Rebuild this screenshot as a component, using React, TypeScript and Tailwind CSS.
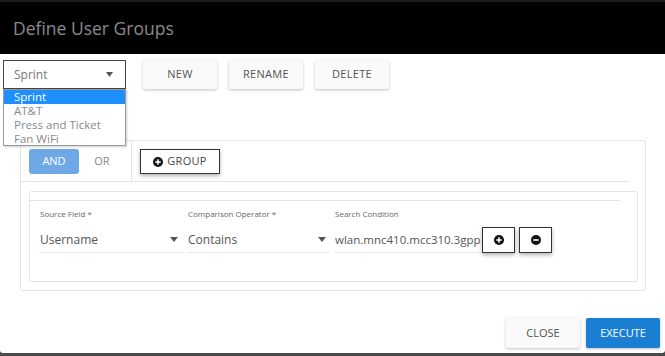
import React from "react";

const font = { fontFamily: '"Open Sans", "Liberation Sans", sans-serif' };

function CircleIcon({ plus }: { plus: boolean }) {
  return (
    <svg width="10" height="10" viewBox="0 0 10 10">
      <circle cx="5" cy="5" r="5" fill="#111" />
      <rect x="2.3" y="4.2" width="5.4" height="1.6" fill="#fff" />
      {plus && <rect x="4.2" y="2.3" width="1.6" height="5.4" fill="#fff" />}
    </svg>
  );
}

function Caret() {
  return (
    <svg width="8" height="5" viewBox="0 0 8 5">
      <path d="M0 0 L8 0 L4 5 Z" fill="#555" />
    </svg>
  );
}

function TopButton({ label }: { label: string }) {
  return (
    <button className="w-[74px] h-[29px] bg-[#fafafa] text-[#555] text-[11px] tracking-[0.3px] rounded-[2px] shadow-[0_1px_3px_rgba(0,0,0,0.25)] flex items-center justify-center">
      {label}
    </button>
  );
}

export default function App() {
  return (
    <div style={font} className="w-[665px] h-[356px] flex flex-col bg-[#4a4a4a] overflow-hidden">
      <div className="h-[54px] bg-black border-t-2 border-[#1c1c1c] flex items-center pl-[13px] shrink-0">
        <span className="text-[17.5px] text-[#8a8a8a]">Define User Groups</span>
      </div>
      <div className="h-[299px] bg-white rounded-b-[3px] flex flex-col shrink-0">
        {/* top row */}
        <div className="flex items-start pt-[6px] pl-[3px]">
          <div className="relative w-[123px] h-[29px]">
            <div className="w-full h-full border border-[#444] flex items-center justify-between pl-[10px] pr-[12px] text-[12px] text-[#777]">
              <span>Sprint</span>
              <svg width="7" height="5" viewBox="0 0 7 5"><path d="M0 0 L7 0 L3.5 5 Z" fill="#555" /></svg>
            </div>
            <div className="absolute left-0 top-[29px] w-[123px] bg-white border border-[#9a9a9a] shadow-[1px_1px_2px_rgba(0,0,0,0.2)] text-[11.5px] text-[#8a8a8a] z-10 flex flex-col">
              <div className="bg-[#1e8fff] text-white pl-[10px] h-[14px] leading-[14px]">Sprint</div>
              <div className="pl-[10px] h-[14px] leading-[14px]">AT&amp;T</div>
              <div className="pl-[10px] h-[14px] leading-[14px]">Press and Ticket</div>
              <div className="pl-[10px] h-[13px] leading-[13px]">Fan WiFi</div>
            </div>
          </div>
          <div className="flex gap-[12px] ml-[17px]">
            <TopButton label="NEW" />
            <TopButton label="RENAME" />
            <TopButton label="DELETE" />
          </div>
        </div>

        {/* group box */}
        <div className="mt-[51px] ml-[20px] w-[626px] h-[151px] border border-[#e4e4e4] rounded-[3px] flex flex-col">
          <div className="h-[41px] flex mr-[16px] border-b border-[#e4e4e4]">
            <div className="flex items-start pt-[8px] pl-[8px] w-[111px] border-r border-[#e4e4e4]">
              <button className="w-[50px] h-[25px] bg-[#6fa8e6] text-white text-[11px] rounded-[3px]">AND</button>
              <button className="w-[46px] h-[25px] text-[#888] text-[11px]">OR</button>
            </div>
            <div className="pl-[8px] pt-[8px]">
              <button className="w-[80px] h-[25px] border border-[#333] bg-white text-[#444] text-[11px] shadow-[0_2px_4px_rgba(0,0,0,0.3)] flex items-center justify-center gap-[4px]">
                <CircleIcon plus />
                <span className="tracking-[0.3px]">GROUP</span>
              </button>
            </div>
          </div>
          <div className="mt-[9px] ml-[8px] w-[609px] h-[91px] border border-[#e4e4e4] rounded-[3px] flex flex-col">
            <div className="mt-[8px] mr-[17px] border-t border-[#e4e4e4]" />
            <div className="flex pl-[10px] pt-[7px] gap-[4px]">
              <div className="w-[144px] flex flex-col">
                <span className="text-[8px] text-[#666] leading-[12px]">Source Field *</span>
                <div className="mt-[7px] h-[26px] border-b border-[#e8e8e8] flex items-center justify-between pr-[6px]">
                  <span className="text-[12px] text-[#555]">Username</span>
                  <Caret />
                </div>
              </div>
              <div className="w-[141px] flex flex-col">
                <span className="text-[8px] text-[#666] leading-[12px]">Comparison Operator *</span>
                <div className="mt-[7px] h-[26px] border-b border-[#e8e8e8] flex items-center justify-between pr-[3px]">
                  <span className="text-[12px] text-[#555]">Contains</span>
                  <Caret />
                </div>
              </div>
              <div className="flex flex-col ml-[2px]">
                <span className="text-[8px] text-[#666] leading-[12px]">Search Condition</span>
                <div className="mt-[7px] flex items-start">
                  <div className="w-[146px] h-[26px] border-b border-[#e8e8e8] overflow-hidden whitespace-nowrap flex items-center">
                    <span className="text-[11.5px] text-[#555]">wlan.mnc410.mcc310.3gpp</span>
                  </div>
                  <div className="flex gap-[4px] ml-[1px]">
                    <button className="w-[33px] h-[26px] border border-[#333] bg-white shadow-[0_2px_4px_rgba(0,0,0,0.3)] flex items-center justify-center">
                      <CircleIcon plus />
                    </button>
                    <button className="w-[33px] h-[26px] border border-[#333] bg-white shadow-[0_2px_4px_rgba(0,0,0,0.3)] flex items-center justify-center">
                      <CircleIcon plus={false} />
                    </button>
                  </div>
                </div>
              </div>
            </div>
          </div>
        </div>

        {/* footer */}
        <div className="flex justify-end gap-[6px] pr-[5px] mt-[27px]">
          <button className="w-[74px] h-[30px] bg-[#fafafa] text-[#555] text-[11px] rounded-[2px] shadow-[0_1px_3px_rgba(0,0,0,0.25)]">CLOSE</button>
          <button className="w-[74px] h-[30px] bg-[#1a7fd3] text-white text-[11px] rounded-[2px] shadow-[0_1px_3px_rgba(0,0,0,0.25)]">EXECUTE</button>
        </div>
      </div>
    </div>
  );
}
